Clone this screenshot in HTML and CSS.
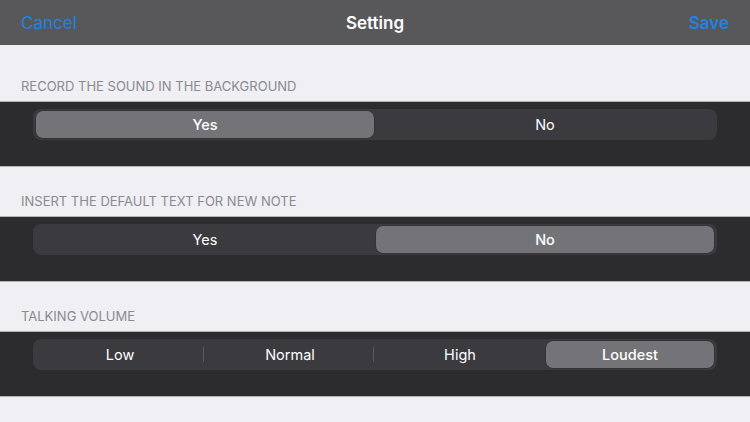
FILE: index.html
```html
<!DOCTYPE html>
<html>
<head>
<meta charset="utf-8">
<link rel="stylesheet" href="styles.css">
</head>
<body>
<div class="nav">
  <div class="nav-left">Cancel</div>
  <div class="nav-title">Setting</div>
  <div class="nav-right">Save</div>
</div>

<div class="group first">
  <div class="header">RECORD THE SOUND IN THE BACKGROUND</div>
  <div class="cell">
    <div class="seg two">
      <div class="item selected">Yes</div>
      <div class="item">No</div>
    </div>
  </div>
</div>

<div class="group">
  <div class="header">INSERT THE DEFAULT TEXT FOR NEW NOTE</div>
  <div class="cell">
    <div class="seg two">
      <div class="item">Yes</div>
      <div class="item selected">No</div>
    </div>
  </div>
</div>

<div class="group">
  <div class="header">TALKING VOLUME</div>
  <div class="cell">
    <div class="seg four">
      <div class="item">Low</div>
      <div class="item sep">Normal</div>
      <div class="item sep">High</div>
      <div class="item selected">Loudest</div>
    </div>
  </div>
</div>
</body>
</html>
```

FILE: styles.css
```css
html, body {
  margin: 0;
  padding: 0;
}
body {
  width: 750px;
  height: 422px;
  overflow: hidden;
  background: #efeff4;
  font-family: Inter, "Liberation Sans", sans-serif;
  -webkit-font-smoothing: antialiased;
}
.nav {
  height: 45px;
  background: #58585a;
  display: grid;
  grid-template-columns: 1fr auto 1fr;
  align-items: center;
  padding: 0 21px;
  box-sizing: border-box;
  font-size: 17px;
}
.nav-left {
  color: #1f82e4;
  justify-self: start;
}
.nav-title {
  color: #ffffff;
  font-weight: 600;
}
.nav-right {
  color: #1f82e4;
  font-weight: 600;
  justify-self: end;
}
.group {
  margin-top: 26px;
}
.group.first {
  margin-top: 33px;
}
.header {
  font-size: 13px;
  line-height: 16px;
  color: #8a8a8f;
  padding: 0 21px 7px;
}
.cell {
  height: 66px;
  box-sizing: border-box;
  background: #2c2c2e;
  border-top: 1px solid #b4b4b8;
  border-bottom: 1px solid #b4b4b8;
  padding: 7px 33px 0;
}
.seg {
  height: 31px;
  background: #3b3a3f;
  border-radius: 8px;
  padding: 2px;
  box-sizing: border-box;
  display: grid;
}
.seg.two {
  grid-template-columns: 1fr 1fr;
}
.seg.four {
  grid-template-columns: 1fr 1fr 1fr 1fr;
}
.item {
  position: relative;
  display: flex;
  align-items: center;
  justify-content: center;
  color: #ffffff;
  font-size: 14.5px;
  border-radius: 7px;
}
.item.selected {
  background: #747378;
  font-weight: 500;
  margin: 0 1px;
  box-shadow: 0 0 0 0.5px rgba(0, 0, 0, 0.25);
}
.item.sep::before {
  content: "";
  position: absolute;
  left: -2px;
  top: 6px;
  bottom: 6px;
  width: 1px;
  background: #58575c;
}
```
